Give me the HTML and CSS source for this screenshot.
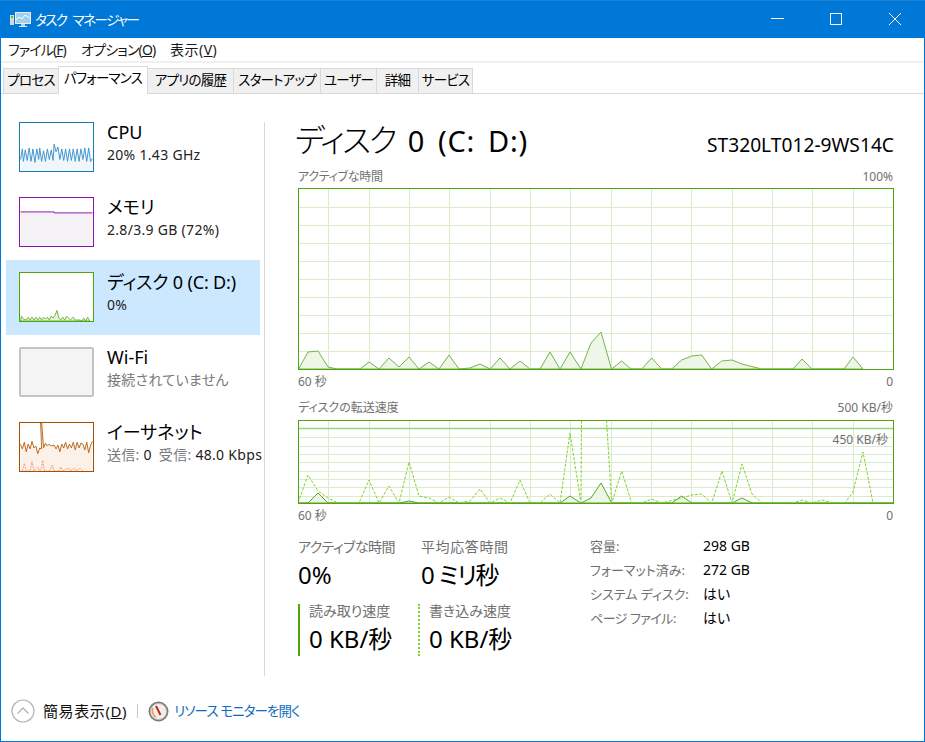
FILE: index.html
```html
<!DOCTYPE html>
<html lang="ja">
<head>
<meta charset="utf-8">
<title>タスク マネージャー</title>
<link rel="stylesheet" href="styles.css">
</head>
<body>
<div class="window">
  <header class="titlebar">
    <svg class="app-icon" width="21" height="18" viewBox="0 0 21 18">
      <rect x="0" y="4" width="4" height="10" fill="#d5d8d4"/>
      <rect x="1" y="5" width="2" height="2" fill="#49c04a"/>
      <rect x="5" y="1" width="16" height="12" fill="#e8edf2"/>
      <rect x="6" y="2" width="14" height="10" fill="#9fd0ee"/>
      <polyline points="6,9 9,6 12,8 15,4 20,7" fill="none" stroke="#fff" stroke-width="1"/>
      <rect x="11" y="13" width="4" height="2" fill="#c9ced2"/>
      <rect x="9" y="15" width="8" height="1" fill="#e8edf2"/>
    </svg>
    <span class="title-text">タスク マネージャー</span>
    <div class="controls">
      <svg width="59" height="38" viewBox="0 0 59 38"><line x1="23" y1="18.5" x2="36" y2="18.5" stroke="#fff"/></svg>
      <svg width="59" height="38" viewBox="0 0 59 38"><rect x="23.5" y="13.5" width="11" height="11" fill="none" stroke="#fff"/></svg>
      <svg width="59" height="38" viewBox="0 0 59 38"><path d="M23 13 L35 25 M35 13 L23 25" stroke="#fff" fill="none"/></svg>
    </div>
  </header>

  <nav class="menubar">
    <span class="menu-item m1">ファイル(<u>F</u>)</span>
    <span class="menu-item m2">オプション(<u>O</u>)</span>
    <span class="menu-item m3">表示(<u>V</u>)</span>
  </nav>

  <div class="tabs">
    <div class="tab">プロセス</div>
    <div class="tab active">パフォーマンス</div>
    <div class="tab">アプリの履歴</div>
    <div class="tab">スタートアップ</div>
    <div class="tab">ユーザー</div>
    <div class="tab">詳細</div>
    <div class="tab">サービス</div>
  </div>

  <main class="main">
    <aside class="sidebar">
      <div class="item">
        <svg class="thumb cpu" width="75" height="50" viewBox="0 0 75 50">
          <polygon fill="#f1f6fa" points="0,38 2,27 3,40 5,28 7,39 9,26 11,40 13,27 15,41 17,27 19,38 20,26 22,40 24,29 26,40 28,27 30,38 32,28 34,39 35,22 37,30 39,25 41,38 43,27 45,39 47,27 49,40 51,27 53,39 55,27 57,40 59,27 61,40 63,27 65,38 67,26 69,40 71,26 73,40 75,37 75,50 0,50"/>
          <polyline fill="none" stroke="#3d94cb" points="0,38 2,27 3,40 5,28 7,39 9,26 11,40 13,27 15,41 17,27 19,38 20,26 22,40 24,29 26,40 28,27 30,38 32,28 34,39 35,22 37,30 39,25 41,38 43,27 45,39 47,27 49,40 51,27 53,39 55,27 57,40 59,27 61,40 63,27 65,38 67,26 69,40 71,26 73,40 75,37"/>
        </svg>
        <div class="item-text"><div class="item-name">CPU</div><div class="item-sub">20% 1.43 GHz</div></div>
      </div>
      <div class="item">
        <svg class="thumb mem" width="75" height="50" viewBox="0 0 75 50">
          <polygon fill="#f4f2f4" points="0,14.5 35,14.5 35,15.5 75,15.5 75,50 0,50"/>
          <polyline fill="none" stroke="#8b12ae" points="0,14.5 35,14.5 35,15.5 75,15.5"/>
        </svg>
        <div class="item-text"><div class="item-name">メモリ</div><div class="item-sub">2.8/3.9 GB (72%)</div></div>
      </div>
      <div class="item selected">
        <svg class="thumb disk" width="75" height="50" viewBox="0 0 75 50">
          <polygon fill="#e9f3e2" stroke="#6db33b" points="0,50 1,45 3,48 6,49 8,46 10,49 12,46 14,49 16,46 18,49 20,46 22,49 24,46 26,48 28,46 30,49 32,45 34,47 36,44 38,39 40,47 42,49 44,46 46,49 48,45 50,47 52,49 55,46 57,49 62,49 64,50 66,47 68,50 70,46 72,50"/>
        </svg>
        <div class="item-text"><div class="item-name tight">ディスク 0 (C: D:)</div><div class="item-sub">0%</div></div>
      </div>
      <div class="item">
        <div class="thumb wifi"></div>
        <div class="item-text"><div class="item-name">Wi-Fi</div><div class="item-sub muted">接続されていません</div></div>
      </div>
      <div class="item">
        <svg class="thumb eth" width="75" height="50" viewBox="0 0 75 50">
          <polygon fill="#fcf1e8" points="0,22 2,27 4,20 6,30 8,22 10,27 12,19 14,26 16,24 18,32 20,26 22,27 21,0 24,0 24,26 26,21 28,24 30,22 32,24 35,23 37,27 39,23 41,30 43,22 45,26 47,20 49,27 51,22 53,26 55,20 57,28 59,20 61,26 63,21 65,22 67,28 69,20 71,31 73,23 75,19 75,50 0,50"/>
          <polyline fill="none" stroke="#b9651c" points="0,22 2,27 4,20 6,30 8,22 10,27 12,19 14,26 16,24 18,32 20,26 22,27 21,0 22,0 24,26 26,21 28,24 30,22 32,24 35,23 37,27 39,23 41,30 43,22 45,26 47,20 49,27 51,22 53,26 55,20 57,28 59,20 61,26 63,21 65,22 67,28 69,20 71,31 73,23 75,19"/>
          <polyline fill="none" stroke="#eb9a79" stroke-dasharray="2 1" points="2,50 4,42 6,50 10,50 12,40 14,50 18,46 20,50 22,47 23,39 25,50 30,50 33,44 35,50 40,50 42,46 44,50 50,47 52,50 56,47 58,50 62,47 65,50"/>
        </svg>
        <div class="item-text"><div class="item-name">イーサネット</div><div class="item-sub"><span class="muted">送信:</span> 0 <span class="muted recv">受信:</span> 48.0 Kbps</div></div>
      </div>
    </aside>

    <section class="detail">
      <div class="detail-head">
        <h1 class="detail-title"><span class="kana">ディスク</span> 0 (C: D:)</h1>
        <div class="detail-model">ST320LT012-9WS14C</div>
      </div>

      <div class="axis axis-top"><span class="tight">アクティブな時間</span><span>100%</span></div>
      <svg class="chart" width="596" height="182" viewBox="298 188 596 182">
        <g stroke="#d9eccb" fill="none">
          <path d="M328.5 188V369M369.5 188V369M409.5 188V369M449.5 188V369M490.5 188V369M530.5 188V369M570.5 188V369M611.5 188V369M651.5 188V369M691.5 188V369M732.5 188V369M772.5 188V369M812.5 188V369M853.5 188V369"/>
          <path d="M298 207.5H893M298 225.5H893M298 243.5H893M298 261.5H893M298 279.5H893M298 297.5H893M298 315.5H893M298 333.5H893M298 351.5H893"/>
        </g>
        <polygon fill="#eef6e8" stroke="#73b54a" points="298.5,369 308,352 318,351 328,367 337,369 360,369 369,362 379,369 389,358 399,367 409,357 419,369 429,362 439,369 449,355 459,369 470,368 480,364 490,369 500,358 510,369 520,361 530,369 540,369 550,352 560,369 570,352 581,369 591,343 601,332 611.5,369 621.7,361 631,369 641.7,369 651.7,358 661.7,369 671.7,369 681.7,360 691.7,356 701.7,355 711.7,369 721.7,361 732,360 742,364 761.7,369 793,369 802,359 812,369 844,369 853,357 863,369"/>
        <rect x="298.5" y="188.5" width="595" height="181" fill="none" stroke="#4da60c"/>
      </svg>
      <div class="axis axis-bottom"><span>60 秒</span><span>0</span></div>

      <div class="axis axis-second"><span>ディスクの転送速度</span><span>500 KB/秒</span></div>
      <div class="chart-wrap">
        <svg class="chart" width="596" height="84" viewBox="298 419 596 84">
          <g stroke="#d9eccb" fill="none">
            <path d="M328.5 419V502M369.5 419V502M409.5 419V502M449.5 419V502M490.5 419V502M530.5 419V502M570.5 419V502M611.5 419V502M651.5 419V502M691.5 419V502M732.5 419V502M772.5 419V502M812.5 419V502M853.5 419V502"/>
            <path d="M298 436.5H893M298 445.5H893M298 453.5H893M298 461.5H893M298 470.5H893M298 478.5H893M298 486.5H893M298 495.5H893"/>
          </g>
          <line x1="298" y1="427.5" x2="893" y2="427.5" stroke="#96d481" stroke-width="1.4"/>
          <polygon fill="#eef6e8" stroke="#5da32f" points="298,502 308,502 318,492 328,502 399,502 409,500 419,502 560,502 570,495 581,502 591,497 601,482 611.7,502 671.7,502 681.7,495 691.7,502 732,502 742,497 752,502 893,502"/>
          <polyline fill="none" stroke="#7fd32c" stroke-dasharray="3 1.5" points="298,502 308,474 318,490 328,497 338,502 359,502 369,479 379,502 389,485 399,502 409,461 419,495 429,497 439,502 449,496 459,502 470,500 480,488 490,502 500,497 510,502 520,479 530,502 540,502 550,493 560,502 570,432 581,502 581.5,419"/>
          <polyline fill="none" stroke="#7fd32c" stroke-dasharray="3 1.5" points="606.5,419 611.7,502 621.7,470 631.7,502 641.7,502 651.7,498 661.7,502 681.7,497 691.7,494 701.7,493 711.7,502 722,470 732,502 742,463 752,493 762,502 793,502 802,499 812,502 822,499 832,502 845,502 853,491 863,451 873,502"/>
          <rect x="298.5" y="419.5" width="595" height="83" fill="none" stroke="#4da60c"/>
        </svg>
        <span class="chart-note">450 KB/秒</span>
      </div>
      <div class="axis axis-bottom2"><span>60 秒</span><span>0</span></div>

      <div class="stats">
        <div class="stats-left">
          <div class="stat-row">
            <div class="stat s1"><div class="stat-label kana-label">アクティブな時間</div><div class="stat-value">0%</div></div>
            <div class="stat"><div class="stat-label kanji-label">平均応答時間</div><div class="stat-value kana-value">0 ミリ秒</div></div>
          </div>
          <div class="stat-row row2">
            <div class="stat s1 read"><div class="stat-label">読み取り速度</div><div class="stat-value">0 KB/秒</div></div>
            <div class="stat write"><div class="stat-label">書き込み速度</div><div class="stat-value">0 KB/秒</div></div>
          </div>
        </div>
        <dl class="props">
          <dt>容量:</dt><dd>298 GB</dd>
          <dt>フォーマット済み:</dt><dd>272 GB</dd>
          <dt>システム ディスク:</dt><dd>はい</dd>
          <dt class="tight">ページ ファイル:</dt><dd>はい</dd>
        </dl>
      </div>
    </section>
  </main>

  <footer class="footer">
    <svg class="collapse" width="24" height="24" viewBox="0 0 24 24">
      <circle cx="12" cy="12" r="11" fill="#fff" stroke="#b4b4b4" stroke-width="1.2"/>
      <polyline points="6.5,14.5 12,9 17.5,14.5" fill="none" stroke="#b4b4b4" stroke-width="1.4"/>
    </svg>
    <span class="less">簡易表示(<u>D</u>)</span>
    <span class="sep"></span>
    <svg class="gauge" width="21" height="21" viewBox="0 0 21 21">
      <circle cx="10.5" cy="10.5" r="10" fill="#7d7d78"/>
      <circle cx="10.5" cy="10.5" r="8" fill="#f3f0ea" stroke="#c2c0ba"/>
      <path d="M5 7 A7 7 0 0 0 8 16" fill="none" stroke="#e8a060" stroke-width="1.6"/>
      <line x1="8" y1="5" x2="12.5" y2="14" stroke="#c8201c" stroke-width="2"/>
    </svg>
    <span class="link">リソース モニターを開く</span>
  </footer>
</div>
</body>
</html>
```
FILE: styles.css
```css
* { box-sizing: border-box; }
html, body { margin: 0; padding: 0; }
body {
  width: 925px;
  height: 742px;
  overflow: hidden;
  background: #fff;
  color: #000;
  font-family: "Noto Sans", "Noto Sans CJK JP", sans-serif;
  font-feature-settings: "palt";
  font-size: 14px;
  line-height: 20px;
}
.window {
  width: 925px;
  height: 742px;
  display: flex;
  flex-direction: column;
  border: 1px solid #0078d7;
  border-top: 0;
}
.titlebar {
  height: 38px;
  margin: 0 -1px;
  background: #0078d7;
  border-top: 1px solid #1a85db;
  display: flex;
  align-items: center;
  color: #fff;
  padding-left: 10px;
  flex: none;
}
.app-icon { flex: none; margin-right: 4px; }
.title-text { font-size: 13.5px; letter-spacing: -1.5px; word-spacing: 4px; color: #fff; }
.controls { margin-left: auto; display: flex; margin-top: -1px; }
.controls svg { display: block; }

.menubar {
  height: 25px;
  flex: none;
  display: flex;
  align-items: center;
  padding-left: 7px;
  border-bottom: 2px solid #f0f0f0;
  color: #1a1a1a;
}
.m1 { width: 73px; letter-spacing: -.9px; }
.m2 { width: 89px; letter-spacing: -.8px; }
.m3 { letter-spacing: .5px; }

.tabs {
  flex: none;
  display: grid;
  grid-template-columns: 56px 89px 86px 87px 56px 42px 54px;
  height: 31px;
  padding: 3px 0 0 2px;
  border-bottom: 1px solid #d9d9d9;
  position: relative;
}
.tab {
  margin-top: 2px;
  height: 25px;
  line-height: 23px;
  text-align: center;
  background: #f0f0f0;
  border: 1px solid #d9d9d9;
  border-left-width: 0;
  border-bottom: 0;
  white-space: nowrap;
  font-size: 13.5px;
  letter-spacing: -.8px;
}
.tab:first-child { border-left-width: 1px; }
.tab.active {
  margin-top: 0;
  height: 28px;
  background: #fff;
  border-left-width: 1px;
  margin-left: -1px;
  position: relative;
}

.main {
  flex: 1;
  min-height: 0;
  display: flex;
}
.sidebar {
  width: 264px;
  margin-top: 28px;
  margin-bottom: 5px;
  margin-left: 0;
  border-right: 1px solid #d9d9d9;
  padding-left: 5px;
  padding-right: 4px;
  flex: none;
}
.item {
  height: 75px;
  display: flex;
  padding: 12px 0 0 13px;
  margin-top: 0;
}
.sidebar .item:first-child { margin-top: -12px; }
.item.selected { background: #cce8ff; }
.thumb { flex: none; display: block; border: 1px solid; width: 75px; height: 50px; box-sizing: border-box; overflow: hidden; }
.cpu { border-color: #117dbb; }
.mem { border-color: #8b12ae; }
.disk { border-color: #4da60c; background: #fff; }
.wifi { border: 2px solid #c4c4c4; border-radius: 2px; background: #f5f5f5; }
.eth { border-color: #a74f01; }
.item-text { margin-left: 13px; padding-top: 1px; white-space: nowrap; }
.item-name { font-size: 18px; line-height: 22px; margin-top: -2px; }
.item-name.tight { letter-spacing: -.15px; }
.item-sub { font-size: 14px; line-height: 20px; margin-top: 2px; color: #222; letter-spacing: .3px; }
.muted { color: #7a7a7a; }
.recv { margin-left: 3px; }

.detail {
  flex: none;
  width: 596px;
  margin-left: 33px;
}
.detail-head {
  height: 76px;
  display: flex;
  justify-content: space-between;
  align-items: flex-start;
}
.detail-title {
  margin: 24px 0 0 -3px;
  font-size: 29px;
  line-height: 44px;
  font-weight: 400;
  letter-spacing: .8px;
  word-spacing: 4.5px;
  white-space: nowrap;
}
.kana { font-size: 32px; letter-spacing: -2.5px; font-weight: 300; }
.detail-model { font-size: 19.2px; line-height: 24px; margin-top: 39px; }
.axis {
  display: flex;
  justify-content: space-between;
  color: #707070;
  font-size: 12px;
  line-height: 18px;
  padding-right: 1px;
}
.axis .tight { letter-spacing: -.3px; }
.axis-top { height: 18px; line-height: 14px; }
.chart { display: block; }
.axis-bottom { height: 24px; padding-top: 3px; }
.axis-second { height: 26px; padding-top: 0; align-items: flex-end; padding-bottom: 3px; }
.axis-bottom2 { height: 24px; padding-top: 3px; }
.chart-wrap { position: relative; }
.chart-note { position: absolute; right: 6px; top: 11px; font-size: 12px; line-height: 18px; color: #707070; background: transparent; }

.stats { display: flex; margin-top: 9px; }
.stats-left { width: 292px; flex: none; }
.stat-row { display: flex; }
.row2 { margin-top: 13px; }
.row2 .stat-label { margin-top: -3px; }
.stat-label { font-size: 14px; line-height: 20px; color: #707070; }
.kana-label { letter-spacing: -.6px; }
.kanji-label { letter-spacing: .6px; }
.stat-value { font-size: 24px; line-height: 32px; margin-top: 2px; white-space: nowrap; }
.kana-value { letter-spacing: -1.2px; }
.s1 { width: 123px; }
.read { width: 120px; border-left: 2px solid #4da60c; padding-left: 9px; height: 52px; }
.write { border-left: 2px dotted #7fd32c; padding-left: 9px; height: 52px; }
.props {
  margin: -1px 0 0;
  display: grid;
  grid-template-columns: 113px auto;
  grid-auto-rows: 24px;
}
.props dt { color: #707070; font-size: 13px; line-height: 20px; white-space: nowrap; }
.props dt.tight { letter-spacing: -.5px; }
.props dd { margin: 0; font-size: 14px; line-height: 20px; }

.footer {
  flex: none;
  height: 60px;
  display: flex;
  align-items: center;
  padding-left: 10px;
}
.collapse { flex: none; }
.less { margin-left: 8px; font-size: 15px; letter-spacing: .6px; color: #111; }
.sep { width: 1px; height: 14px; background: #c8c8c8; margin: 0 10px 0 10px; }
.gauge { flex: none; }
.link { margin-left: 5px; color: #0f6cbd; font-size: 13.5px; letter-spacing: -.9px; }
```
